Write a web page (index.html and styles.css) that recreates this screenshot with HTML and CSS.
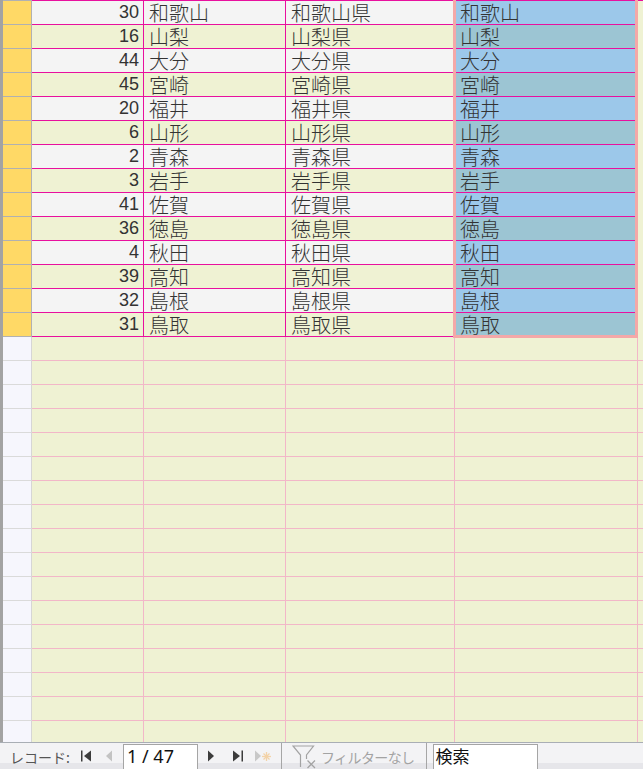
FILE: index.html
```html
<!DOCTYPE html>
<html lang="ja">
<head>
    <meta charset="UTF-8">
    <title>都道府県</title>
    <link rel="stylesheet" href="styles.css">
</head>
<body>
    <div class="sheet">
        <div class="grid">
            <div class="row data odd"><div class="sel"></div><div class="c num">30</div><div class="c txt">和歌山</div><div class="c txt">和歌山県</div><div class="c c4 txt">和歌山</div><div class="rest"></div></div>
            <div class="row data even"><div class="sel"></div><div class="c num">16</div><div class="c txt">山梨</div><div class="c txt">山梨県</div><div class="c c4 txt">山梨</div><div class="rest"></div></div>
            <div class="row data odd"><div class="sel"></div><div class="c num">44</div><div class="c txt">大分</div><div class="c txt">大分県</div><div class="c c4 txt">大分</div><div class="rest"></div></div>
            <div class="row data even"><div class="sel"></div><div class="c num">45</div><div class="c txt">宮崎</div><div class="c txt">宮崎県</div><div class="c c4 txt">宮崎</div><div class="rest"></div></div>
            <div class="row data odd"><div class="sel"></div><div class="c num">20</div><div class="c txt">福井</div><div class="c txt">福井県</div><div class="c c4 txt">福井</div><div class="rest"></div></div>
            <div class="row data even"><div class="sel"></div><div class="c num">6</div><div class="c txt">山形</div><div class="c txt">山形県</div><div class="c c4 txt">山形</div><div class="rest"></div></div>
            <div class="row data odd"><div class="sel"></div><div class="c num">2</div><div class="c txt">青森</div><div class="c txt">青森県</div><div class="c c4 txt">青森</div><div class="rest"></div></div>
            <div class="row data even"><div class="sel"></div><div class="c num">3</div><div class="c txt">岩手</div><div class="c txt">岩手県</div><div class="c c4 txt">岩手</div><div class="rest"></div></div>
            <div class="row data odd"><div class="sel"></div><div class="c num">41</div><div class="c txt">佐賀</div><div class="c txt">佐賀県</div><div class="c c4 txt">佐賀</div><div class="rest"></div></div>
            <div class="row data even"><div class="sel"></div><div class="c num">36</div><div class="c txt">徳島</div><div class="c txt">徳島県</div><div class="c c4 txt">徳島</div><div class="rest"></div></div>
            <div class="row data odd"><div class="sel"></div><div class="c num">4</div><div class="c txt">秋田</div><div class="c txt">秋田県</div><div class="c c4 txt">秋田</div><div class="rest"></div></div>
            <div class="row data even"><div class="sel"></div><div class="c num">39</div><div class="c txt">高知</div><div class="c txt">高知県</div><div class="c c4 txt">高知</div><div class="rest"></div></div>
            <div class="row data odd"><div class="sel"></div><div class="c num">32</div><div class="c txt">島根</div><div class="c txt">島根県</div><div class="c c4 txt">島根</div><div class="rest"></div></div>
            <div class="row data even"><div class="sel"></div><div class="c num">31</div><div class="c txt">鳥取</div><div class="c txt">鳥取県</div><div class="c c4 txt">鳥取</div><div class="rest"></div></div>

            <div class="row empty"><div class="sel"></div><div class="c"></div><div class="c"></div><div class="c"></div><div class="c"></div><div class="rest"></div></div>
            <div class="row empty"><div class="sel"></div><div class="c"></div><div class="c"></div><div class="c"></div><div class="c"></div><div class="rest"></div></div>
            <div class="row empty"><div class="sel"></div><div class="c"></div><div class="c"></div><div class="c"></div><div class="c"></div><div class="rest"></div></div>
            <div class="row empty"><div class="sel"></div><div class="c"></div><div class="c"></div><div class="c"></div><div class="c"></div><div class="rest"></div></div>
            <div class="row empty"><div class="sel"></div><div class="c"></div><div class="c"></div><div class="c"></div><div class="c"></div><div class="rest"></div></div>
            <div class="row empty"><div class="sel"></div><div class="c"></div><div class="c"></div><div class="c"></div><div class="c"></div><div class="rest"></div></div>
            <div class="row empty"><div class="sel"></div><div class="c"></div><div class="c"></div><div class="c"></div><div class="c"></div><div class="rest"></div></div>
            <div class="row empty"><div class="sel"></div><div class="c"></div><div class="c"></div><div class="c"></div><div class="c"></div><div class="rest"></div></div>
            <div class="row empty"><div class="sel"></div><div class="c"></div><div class="c"></div><div class="c"></div><div class="c"></div><div class="rest"></div></div>
            <div class="row empty"><div class="sel"></div><div class="c"></div><div class="c"></div><div class="c"></div><div class="c"></div><div class="rest"></div></div>
            <div class="row empty"><div class="sel"></div><div class="c"></div><div class="c"></div><div class="c"></div><div class="c"></div><div class="rest"></div></div>
            <div class="row empty"><div class="sel"></div><div class="c"></div><div class="c"></div><div class="c"></div><div class="c"></div><div class="rest"></div></div>
            <div class="row empty"><div class="sel"></div><div class="c"></div><div class="c"></div><div class="c"></div><div class="c"></div><div class="rest"></div></div>
            <div class="row empty"><div class="sel"></div><div class="c"></div><div class="c"></div><div class="c"></div><div class="c"></div><div class="rest"></div></div>
            <div class="row empty"><div class="sel"></div><div class="c"></div><div class="c"></div><div class="c"></div><div class="c"></div><div class="rest"></div></div>
            <div class="row empty"><div class="sel"></div><div class="c"></div><div class="c"></div><div class="c"></div><div class="c"></div><div class="rest"></div></div>
            <div class="row empty"><div class="sel"></div><div class="c"></div><div class="c"></div><div class="c"></div><div class="c"></div><div class="rest"></div></div>

            <!-- selected column outline -->
            <div class="selection"></div>
        </div>

        <div class="nav">
            <span class="label">レコード:</span>
            <svg class="ico first" width="12" height="12" viewBox="0 0 12 12"><rect x="0" y="0.5" width="1.5" height="11" fill="#3c3c3c"/><polygon points="10,0.5 3,6 10,11.5" fill="#3c3c3c"/></svg>
            <svg class="ico prev" width="8" height="12" viewBox="0 0 8 12"><polygon points="7,0.5 1,6 7,11.5" fill="#c3c3c3"/></svg>
            <div class="box pos">1 / 47</div>
            <svg class="ico next" width="8" height="12" viewBox="0 0 8 12"><polygon points="1,0.5 7,6 1,11.5" fill="#3c3c3c"/></svg>
            <svg class="ico last" width="12" height="12" viewBox="0 0 12 12"><polygon points="1,0.5 8,6 1,11.5" fill="#3c3c3c"/><rect x="9.5" y="0.5" width="1.5" height="11" fill="#3c3c3c"/></svg>
            <svg class="ico new" width="17" height="12" viewBox="0 0 17 12"><polygon points="1,0.5 7,6 1,11.5" fill="#c8c8c8"/><g stroke="#f3d3a8" stroke-width="1.3"><line x1="12.5" y1="2" x2="12.5" y2="11"/><line x1="8" y1="6.5" x2="17" y2="6.5"/><line x1="9.5" y1="3.5" x2="15.5" y2="9.5"/><line x1="15.5" y1="3.5" x2="9.5" y2="9.5"/></g></svg>
            <span class="sep"></span>
            <svg class="ico filter" width="26" height="24" viewBox="0 0 26 24"><polyline points="8.5,22 8.5,10 1,1 21.5,1 14.5,10 14.5,14" fill="none" stroke="#a3a3a3" stroke-width="1.2"/><g stroke="#a3a3a3" stroke-width="1.3"><line x1="15.5" y1="15.5" x2="23" y2="23"/><line x1="23" y1="15.5" x2="15.5" y2="23"/></g></svg>
            <span class="filter-text">フィルターなし</span>
            <span class="sep wide"></span>
            <div class="box search">検索</div>
        </div>
    </div>
</body>
</html>
```

FILE: styles.css
```css
* {
    box-sizing: border-box;
}

body {
    margin: 0;
    font-family: "Noto Sans CJK JP", sans-serif;
    color: #333;
    background: #eff2d3;
    overflow: hidden;
}

.sheet {
    width: 643px;
    height: 769px;
    display: flex;
    flex-direction: column;
}

.grid {
    position: relative;
    flex: 1;
    border-left: 3px solid #a3a3a3;
    background: #eff2d3;
    overflow: hidden;
}

.row {
    display: grid;
    grid-template-columns: 29px 112px 142px 169px 183px 1fr;
    height: 24px;
}

.row:first-child {
    height: 25px;
}

.row > div {
    border-bottom: 1px solid;
    line-height: 23px;
    white-space: nowrap;
}

/* rows with records */
.data > div {
    border-bottom-color: #e8109e;
}

.data:first-child > div {
    border-top: 1px solid #e8109e;
}

.data .sel {
    background: #ffd966;
    border-right: 1px solid #b1b1b1;
    border-bottom-color: #b1b1b1;
}

.data:first-child .sel {
    border-top-color: #b1b1b1;
}

.data .c {
    border-right: 1px solid #e8109e;
}

.odd .c {
    background: #f4f4f4;
}

.even .c {
    background: #eff2d3;
}

.odd .c4 {
    background: #9cc8ea;
}

.even .c4 {
    background: #9cc5d3;
}

.data .rest {
    background: #eff2d3;
    border-bottom-color: transparent;
    border-top-color: transparent;
}

.num {
    text-align: right;
    padding-right: 4px;
    font-family: "Liberation Sans", sans-serif;
    font-size: 18px;
}

.txt {
    padding-left: 5px;
    font-size: 20px;
    font-weight: 300;
}

/* blank rows below the records */
.empty > div {
    border-bottom-color: #f2b7c8;
}

.empty .sel {
    background: #f6f6fd;
    border-right: 1px solid #d6d6d6;
    border-bottom-color: #dadada;
}

.empty .c {
    border-right: 1px solid #f2b7c8;
}

.selection {
    position: absolute;
    left: 450px;
    top: 0;
    width: 185px;
    height: 338px;
    border: 3px solid #f4a8a8;
    border-top: 0;
    pointer-events: none;
}

/* navigation bar */
.nav {
    flex: none;
    height: 27px;
    border-top: 1px solid #a9aeb5;
    background: linear-gradient(#f3f3f5 0 20px, #e6e6ea 20px);
    display: flex;
    align-items: center;
    font-size: 14px;
    color: #555;
    white-space: nowrap;
}

.nav > * {
    flex: none;
}

.label {
    margin-left: 10px;
    width: 60px;
    line-height: 20px;
    padding-top: 2px;
}

.first { margin-left: 11px; }
.prev { margin-left: 12px; }
.next { margin-left: 9px; }
.last { margin-left: 17px; }
.new { margin-left: 10px; }

.box {
    align-self: flex-start;
    margin-top: 1px;
    height: 26px;
    border: 1px solid #a5a5a5;
    background: #fff;
    color: #111;
    line-height: 22px;
}

.pos {
    margin-left: 10px;
    width: 75px;
    padding-left: 3px;
    font-family: "Noto Sans", sans-serif;
    font-size: 18px;
}

.search {
    margin-left: 6px;
    width: 105px;
    padding-left: 2px;
    font-size: 17px;
}

.sep {
    align-self: stretch;
    width: 1px;
    margin-left: 10px;
    background: #a6a6a6;
}

.sep.wide {
    margin-left: 11px;
}

.filter {
    margin-left: 10px;
    align-self: flex-end;
}

.filter-text {
    margin-left: 3px;
    color: #a3a3a3;
    letter-spacing: -0.6px;
    line-height: 20px;
    padding-top: 2px;
}
```
